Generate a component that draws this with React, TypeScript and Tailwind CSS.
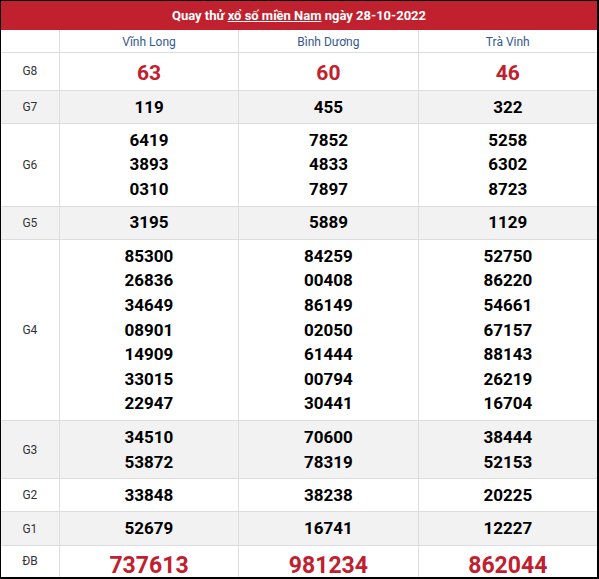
const provinces = ['Vĩnh Long', 'Bình Dương', 'Trà Vinh']

type Row = {
  label: string
  h: string
  shade?: boolean
  kind?: 'g8' | 'db'
  values: string[][]
}

const rows: Row[] = [
  { label: 'G8', h: 'h-[38px]', kind: 'g8', values: [['63'], ['60'], ['46']] },
  { label: 'G7', h: 'h-[33px]', shade: true, values: [['119'], ['455'], ['322']] },
  {
    label: 'G6',
    h: 'h-[83px]',
    values: [
      ['6419', '3893', '0310'],
      ['7852', '4833', '7897'],
      ['5258', '6302', '8723'],
    ],
  },
  { label: 'G5', h: 'h-[33px]', shade: true, values: [['3195'], ['5889'], ['1129']] },
  {
    label: 'G4',
    h: 'h-[182px]',
    values: [
      ['85300', '26836', '34649', '08901', '14909', '33015', '22947'],
      ['84259', '00408', '86149', '02050', '61444', '00794', '30441'],
      ['52750', '86220', '54661', '67157', '88143', '26219', '16704'],
    ],
  },
  {
    label: 'G3',
    h: 'h-[58px]',
    shade: true,
    values: [
      ['34510', '53872'],
      ['70600', '78319'],
      ['38444', '52153'],
    ],
  },
  { label: 'G2', h: 'h-[33px]', values: [['33848'], ['38238'], ['20225']] },
  { label: 'G1', h: 'h-[34px]', shade: true, values: [['52679'], ['16741'], ['12227']] },
  { label: 'ĐB', h: 'h-[31px]', kind: 'db', values: [['737613'], ['981234'], ['862044']] },
]

function Cell({ row, nums }: { row: Row; nums: string[] }) {
  const numClass =
    row.kind === 'g8'
      ? 'text-[21px] text-[#c1202e] leading-[24px] pt-[4px]'
      : row.kind === 'db'
        ? 'text-[23px] text-[#c1202e] leading-[26px] pt-[9px]'
        : 'text-[17px] text-black leading-[24.6px]'
  return (
    <div className="w-[180px] border-l border-[#dddddd] flex flex-col items-center justify-center">
      {nums.map((n) => (
        <div key={n} className={`font-bold ${numClass}`}>
          {n}
        </div>
      ))}
    </div>
  )
}

export default function App() {
  return (
    <div className="w-[599px] h-[579px] bg-white font-['Roboto',sans-serif]">
      <div className="w-[599px] h-[579px] border-t border-l border-r-2 border-b-2 border-black flex flex-col overflow-hidden">
        {/* Header */}
        <div className="h-[29px] bg-[#c1202e] flex items-center justify-center text-white font-bold text-[13px]">
          <span>
            Quay thử <span className="underline">xổ số miền Nam</span> ngày 28-10-2022
          </span>
        </div>

        {/* Province names */}
        <div className="h-[23px] flex border-b border-[#dddddd]">
          <div className="w-[58px]" />
          {provinces.map((p) => (
            <div
              key={p}
              className="w-[180px] border-l border-[#dddddd] flex items-center justify-center pt-[2px] text-[12px] text-[#34598f]"
            >
              {p}
            </div>
          ))}
        </div>

        {rows.map((row, i) => (
          <div
            key={row.label}
            className={`${row.h} flex ${i < rows.length - 1 ? 'border-b border-[#dddddd]' : ''} ${
              row.shade ? 'bg-[#f2f2f2]' : 'bg-white'
            }`}
          >
            <div className="w-[58px] flex items-center justify-center text-[12px] text-[#333333]">{row.label}</div>
            {row.values.map((nums, j) => (
              <Cell key={j} row={row} nums={nums} />
            ))}
          </div>
        ))}
      </div>
    </div>
  )
}
